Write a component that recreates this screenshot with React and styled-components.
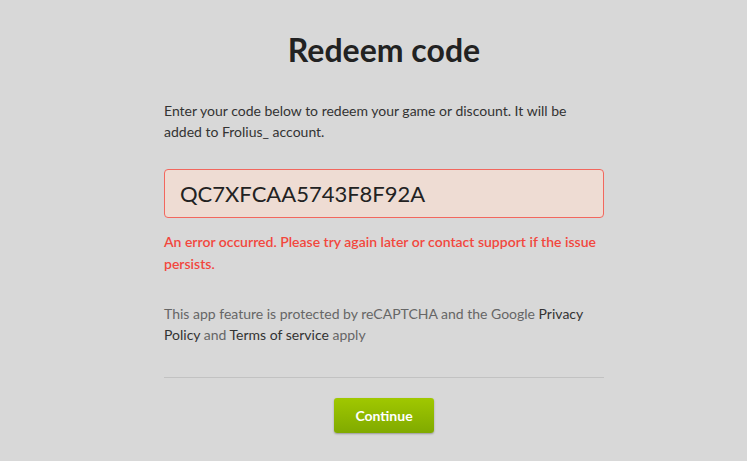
import styled, { createGlobalStyle } from "styled-components";

const GlobalStyle = createGlobalStyle`
  html, body {
    margin: 0;
    padding: 0;
    background: #d8d8d8;
    font-family: Lato, "Open Sans", sans-serif;
    color: #333;
  }
`;

const Page = styled.main`
  min-height: 461px;
  padding-left: 21px;
  box-sizing: border-box;
`;

const Panel = styled.section`
  width: 440px;
  margin: 0 auto;
  padding-top: 27px;
`;

const Title = styled.h1`
  margin: 0;
  text-align: center;
  font-size: 32px;
  line-height: 46px;
  font-weight: 700;
  color: #222;
`;

const Intro = styled.p`
  margin: 27px 0 0;
  font-size: 14px;
  line-height: 21px;
  color: #333;
`;

const CodeInput = styled.input`
  display: block;
  width: 100%;
  box-sizing: border-box;
  margin-top: 27px;
  height: 49px;
  padding: 0 15px;
  border: 1px solid #f2675e;
  border-radius: 4px;
  background: #eedcd3;
  font-family: Lato, "Open Sans", sans-serif;
  font-size: 22px;
  color: #222;
  outline: none;
`;

const ErrorText = styled.p`
  margin: 13px 0 0;
  font-size: 14px;
  line-height: 22px;
  font-weight: 600;
  color: #f2473d;
`;

const Legal = styled.p`
  margin: 28px 0 0;
  font-size: 14px;
  line-height: 21px;
  color: #666;

  a {
    color: #333;
    text-decoration: none;
  }
`;

const Divider = styled.hr`
  margin: 32px 0 0;
  border: 0;
  border-top: 1px solid #c2c2c2;
`;

const Actions = styled.div`
  display: flex;
  justify-content: center;
  padding-top: 20px;
`;

const Button = styled.button`
  width: 100px;
  height: 35px;
  border: 0;
  border-radius: 3px;
  background: linear-gradient(#a0c800, #80aa00);
  box-shadow: 0 1px 2px rgba(0, 0, 0, 0.3);
  color: #fff;
  font-family: Lato, "Open Sans", sans-serif;
  font-size: 14px;
  font-weight: 700;
  cursor: pointer;
`;

const App = () => {
  return (
    <>
      <GlobalStyle />
      <Page>
        <Panel>
          <Title>Redeem code</Title>
          <Intro>
            Enter your code below to redeem your game or discount. It will be
            added to Frolius_ account.
          </Intro>
          <CodeInput defaultValue="QC7XFCAA5743F8F92A" />
          <ErrorText>
            An error occurred. Please try again later or contact support if the
            issue persists.
          </ErrorText>
          <Legal>
            This app feature is protected by reCAPTCHA and the Google{" "}
            <a href="#">Privacy Policy</a> and <a href="#">Terms of service</a>{" "}
            apply
          </Legal>
          <Divider />
          <Actions>
            <Button>Continue</Button>
          </Actions>
        </Panel>
      </Page>
    </>
  );
};

export default App;
